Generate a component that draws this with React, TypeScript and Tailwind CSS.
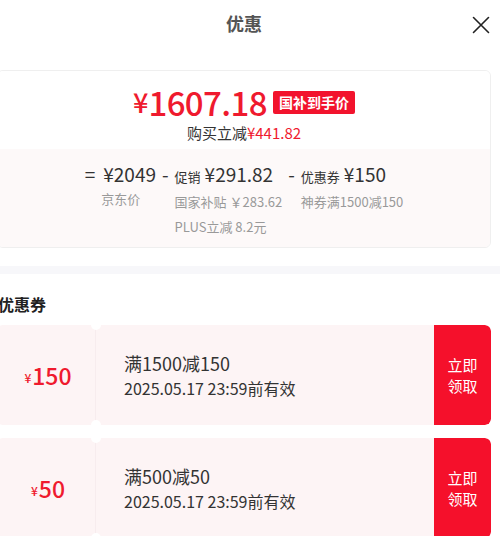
const font = { fontFamily: '"Noto Sans CJK SC", "Noto Sans", sans-serif' };

interface Coupon {
  amount: string;
  title: string;
  expire: string;
}

const coupons: Coupon[] = [
  { amount: "150", title: "满1500减150", expire: "2025.05.17 23:59前有效" },
  { amount: "50", title: "满500减50", expire: "2025.05.17 23:59前有效" },
];

function CloseIcon() {
  return (
    <svg viewBox="0 0 18 18" className="h-[18px] w-[18px]" fill="none" stroke="#222" strokeWidth={1.6} strokeLinecap="round">
      <path d="M1.5 1.5l15 15M16.5 1.5l-15 15" />
    </svg>
  );
}

function CouponCard({ coupon }: { coupon: Coupon }) {
  return (
    <div className="relative flex h-[100px] overflow-hidden rounded-[6px] bg-[#fdf4f5]">
      <div className="flex w-[99px] shrink-0 items-center justify-center border-r border-[#f7ecee] pl-[4px] text-[#ef1a2e]">
        <span className="mt-[6px] text-[12px] font-medium">¥</span>
        <span className="ml-[1px] text-[23px] font-medium leading-none">{coupon.amount}</span>
      </div>
      <span className="absolute left-[94px] top-[-5px] h-[10px] w-[10px] rounded-full bg-white" />
      <span className="absolute bottom-[-5px] left-[94px] h-[10px] w-[10px] rounded-full bg-white" />
      <div className="flex flex-1 flex-col justify-center pl-[28px] text-[#333]">
        <p className="text-[18px] leading-[26px]">{coupon.title}</p>
        <p className="text-[16px] leading-[25px]">{coupon.expire}</p>
      </div>
      <button className="flex w-[57px] shrink-0 flex-col items-center justify-center rounded-r-[6px] bg-[#f5102b] text-[15px] leading-[21px] text-white">
        <span>立即</span>
        <span>领取</span>
      </button>
    </div>
  );
}

export default function App() {
  return (
    <div className="h-[536px] w-[500px] overflow-hidden bg-white" style={font}>
      <div className="ml-[-12px] w-[512px]">
        <header className="relative flex h-[48px] items-center justify-center">
          <h1 className="mt-[-2px] text-[18px] font-bold text-[#555]">优惠</h1>
          <span className="absolute right-[10px] top-[16px]">
            <CloseIcon />
          </span>
        </header>

        <div className="mx-[9px] mt-[22px] overflow-hidden rounded-[6px] border border-[#efefef]">
          <div className="flex h-[78px] flex-col items-center bg-white pt-[15px]">
            <div className="flex items-center text-[#ef1a2e]">
              <span className="text-[27px] font-medium leading-[32px]">¥</span>
              <span className="text-[33px] font-medium leading-[32px] tracking-[-0.6px]">1607.18</span>
              <span className="ml-[6px] rounded-[2px] bg-[#f2132d] px-[6px] text-[14px] font-bold leading-[23px] text-white">
                国补到手价
              </span>
            </div>
            <p className="mt-[5px] text-[15px] leading-[20px] text-[#333]">
              购买立减<span className="text-[#ef1a2e]">¥441.82</span>
            </p>
          </div>
          <div className="flex h-[98px] justify-center bg-[#fdf9f9] pt-[13px] text-[#333]">
            <span className="mr-[8px] text-[19px] leading-[24px]">=</span>
            <div className="flex flex-col">
              <span className="text-[19px] leading-[24px]">¥2049</span>
              <span className="ml-[-2px] text-[13px] leading-[25px] text-[#999]">京东价</span>
            </div>
            <span className="mx-[6px] text-[19px] leading-[24px]">-</span>
            <div className="flex flex-col">
              <span className="leading-[24px]">
                <span className="text-[13px]">促销</span>
                <span className="ml-[4px] text-[19px]">¥291.82</span>
              </span>
              <span className="text-[13px] leading-[25px] text-[#999]">国家补贴 ￥283.62</span>
              <span className="text-[13px] leading-[25px] text-[#999]">PLUS立减 8.2元</span>
            </div>
            <span className="mx-[6px] text-[19px] leading-[24px]">-</span>
            <div className="flex flex-col">
              <span className="leading-[24px]">
                <span className="text-[13px]">优惠券</span>
                <span className="ml-[4px] text-[19px]">¥150</span>
              </span>
              <span className="text-[13px] leading-[25px] text-[#999]">神券满1500减150</span>
            </div>
          </div>
        </div>

        <div className="mt-[18px] h-[8px] bg-[#f7f7fa]" />

        <h2 className="mt-[19px] px-[10px] text-[16px] font-bold leading-[22px] text-[#222]">优惠券</h2>

        <div className="mx-[9px] mt-[10px] flex flex-col gap-[13px]">
          {coupons.map((c) => (
            <CouponCard key={c.title} coupon={c} />
          ))}
        </div>
      </div>
    </div>
  );
}
